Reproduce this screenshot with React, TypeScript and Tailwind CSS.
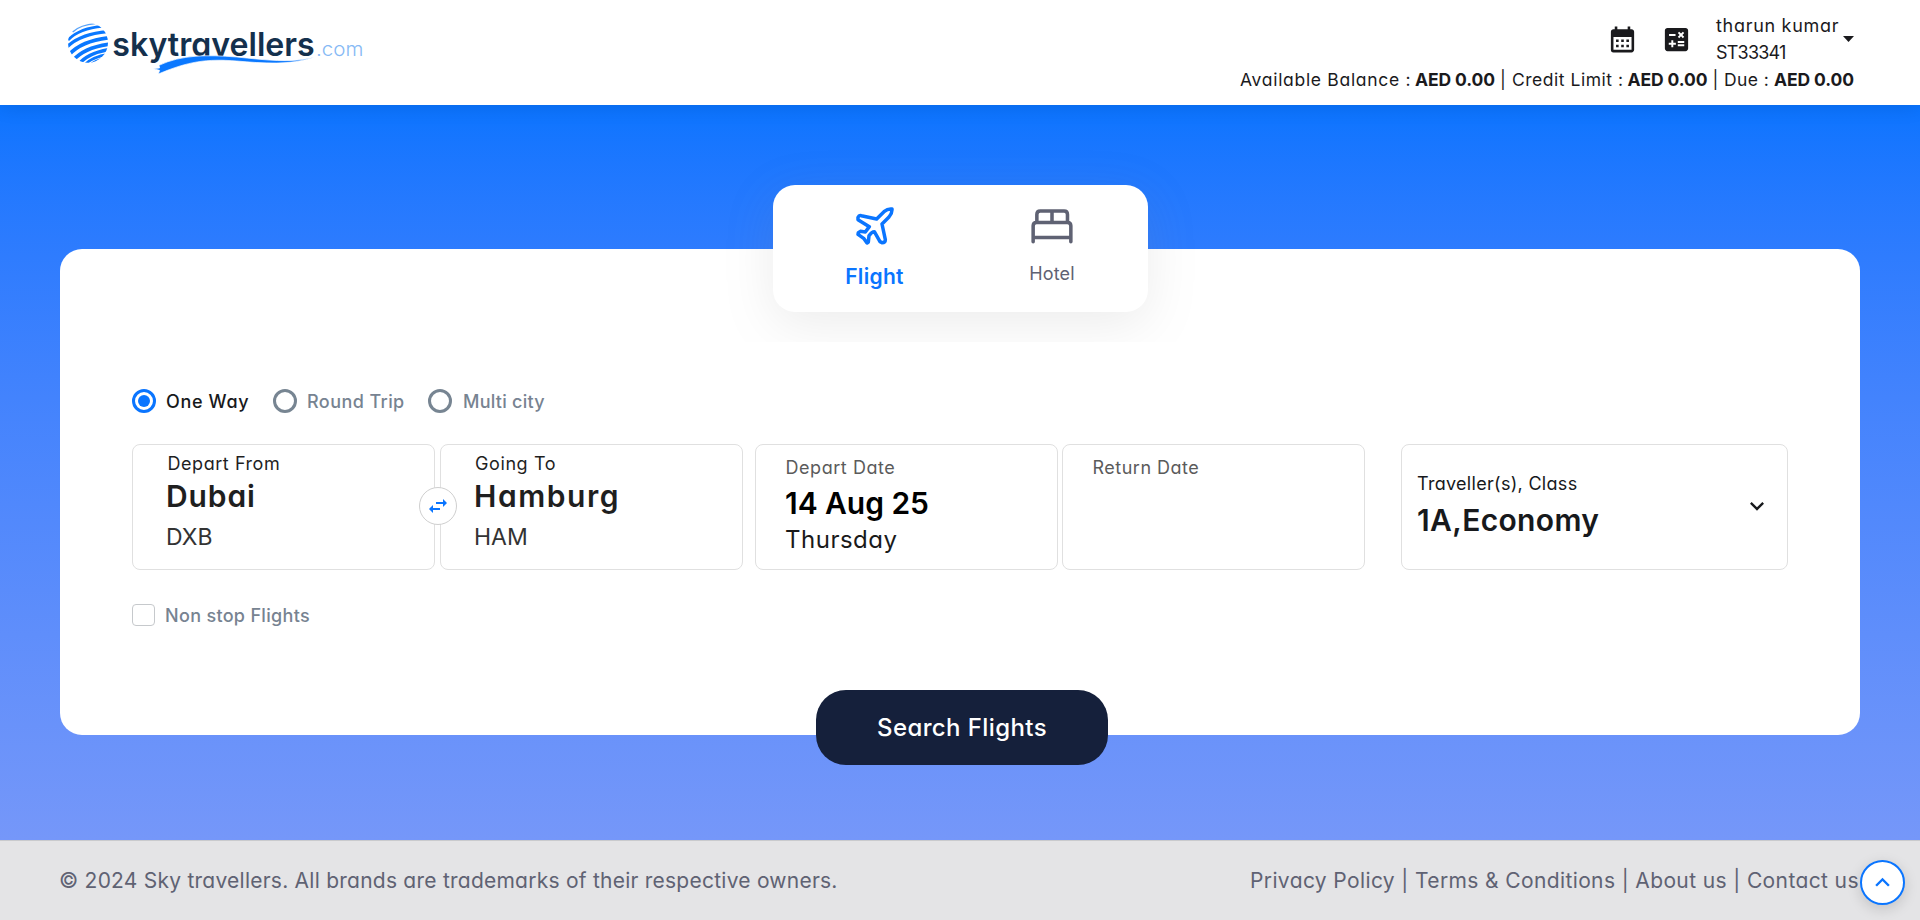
import { MdCalculate, MdCalendarMonth, MdKeyboardArrowDown, MdKeyboardArrowUp, MdSwapHoriz } from "react-icons/md";

function Logo() {
  return (
    <svg width="340" height="104" viewBox="0 0 1020 312" role="img" aria-label="skytravellers.com">
      <defs>
        <clipPath id="globe">
          <circle cx="114" cy="128" r="60" />
        </clipPath>
      </defs>
      <g clipPath="url(#globe)" fill="none" stroke="#0a78ff">
        <path d="M68 96 Q92 74 136 71" strokeWidth="4" stroke="#5ba4f8" />
        <path d="M54 120 Q88 84 158 79" strokeWidth="8" />
        <path d="M50 142 Q90 102 172 95" strokeWidth="10" />
        <path d="M56 165 Q94 122 178 113" strokeWidth="11" />
        <path d="M68 182 Q102 142 180 132" strokeWidth="11" />
        <path d="M84 196 Q108 160 180 148" strokeWidth="10" />
        <path d="M100 200 Q120 172 174 163" strokeWidth="8" />
        <path d="M120 196 Q132 180 162 176" strokeWidth="6" />
      </g>
      <text x="187" y="168" textLength="607" lengthAdjust="spacingAndGlyphs" fontSize="99" fontWeight="600" fill="#14304d">
        skytravellers
      </text>
      <text x="798" y="168" textLength="142" lengthAdjust="spacingAndGlyphs" fontSize="58" fontWeight="300" fill="#86b9f5">
        .com
      </text>
      <path
        d="M310 206 L329 204 L327 196 C395 164 470 164 560 171 C650 180 720 190 793 172 C720 196 640 190 560 183 C470 176 415 184 325 222 L329 211 Z"
        fill="#0a78ff"
        stroke="#ffffff"
        strokeWidth="2"
      />
    </svg>
  );
}

function PlaneIcon() {
  return (
    <svg width="38" height="38" viewBox="0 0 114 114" fill="none" stroke="#0a75ff" strokeWidth="10.5" strokeLinejoin="round">
      <path d="M62 36 L84 14 Q96 4 108 6 Q109 18 99 30 L78 51 L88 98 Q88 107 78 107 L72 104 L55 74 Q47 74 39 86 L37 105 L33 108 L24 95 L6 82 L7 77 L13 73 L28 75 L40 59 L6 38 V31 Q9 24 16 26 Z" />
    </svg>
  );
}

function BedIcon() {
  return (
    <svg width="42" height="35" viewBox="0 0 124 104" fill="none" stroke="#5f6273" strokeWidth="10.5" strokeLinecap="round">
      <path d="M6 97 V50 Q6 40 16 40 H108 Q118 40 118 50 V97 M6 85 H118 M17 38 V16 Q17 6 27 6 H98 Q108 6 108 16 V38 M62 6 V38" />
    </svg>
  );
}

function Header() {
  return (
    <header className="relative z-20 flex h-[105px] justify-between bg-white pl-[50px] pr-[66px] shadow-[0_0_20px_rgba(0,0,0,0.12)]">
      <Logo />
      <div className="flex flex-col items-end pt-3 text-[#1a1a1d]">
        <div className="flex h-[54px] items-center">
          <MdCalendarMonth size={31} className="mr-[23px]" />
          <MdCalculate size={31} className="mr-6" />
          <div className="w-[127px] whitespace-nowrap text-[18px] leading-[27px]">
            <div className="tracking-[0.7px]">tharun kumar</div>
            <div className="tracking-[-0.8px]">ST33341</div>
          </div>
          <svg width="11" height="6" viewBox="0 0 11 6" fill="currentColor">
            <path d="M0 0h11L5.5 6z" />
          </svg>
        </div>
        <div className="flex whitespace-nowrap text-[17.5px] leading-7">
          <span className="w-[175px] tracking-[0.7px]">Available Balance :</span>
          <b className="w-[85px] tracking-[-0.1px]">AED 0.00</b>
          <span className="w-[12px]">|</span>
          <span className="w-[115.5px] tracking-[0.52px]">Credit Limit :</span>
          <b className="w-[85px] tracking-[-0.1px]">AED 0.00</b>
          <span className="w-[11.5px]">|</span>
          <span className="w-[50px] tracking-[0.4px]">Due :</span>
          <b className="w-[80px] tracking-[-0.1px]">AED 0.00</b>
        </div>
      </div>
    </header>
  );
}

function ProductTabs() {
  return (
    <nav className="mx-auto flex h-[127px] w-[375px] rounded-[22px] bg-white pl-[11px] shadow-[0_12px_50px_rgba(130,130,130,0.15)]">
      <button className="flex w-[182px] flex-col items-center pt-[22px] text-[#0a75ff]">
        <PlaneIcon />
        <span className="mt-[17px] text-[21px] font-semibold leading-[30px] tracking-[0.3px]">Flight</span>
      </button>
      <button className="flex w-[173px] flex-col items-center pt-6 text-[#5f6273]">
        <BedIcon />
        <span className="mt-[16px] text-[18px] leading-7 tracking-[0.2px]">Hotel</span>
      </button>
    </nav>
  );
}

function Radio({ checked = false }: { checked?: boolean }) {
  return checked ? (
    <span className="flex size-6 items-center justify-center rounded-full border-[3px] border-[#0a75ff]">
      <span className="size-3 rounded-full bg-[#0a75ff]" />
    </span>
  ) : (
    <span className="size-6 rounded-full border-[3px] border-[#778592]" />
  );
}

const box = "h-[126px] rounded-lg border border-[#e0e0e0] bg-white whitespace-nowrap";
const big = "text-[30px] font-semibold leading-9";
const sub = "leading-8";
const label = "text-[18px] leading-7";

function SearchForm() {
  return (
    <div className="relative z-10 h-[352px] bg-white pl-[72px] pt-[47px]">
      <div className="flex h-6 items-center whitespace-nowrap text-[18px] font-medium text-[#778391]">
        <Radio checked />
        <span className="ml-[10px] w-[107px] tracking-[0.65px] text-[#17191c]">One Way</span>
        <Radio />
        <span className="ml-[10px] w-[121px] tracking-[0.42px]">Round Trip</span>
        <Radio />
        <span className="ml-[11px] tracking-[0.25px]">Multi city</span>
      </div>
      <div className="mt-[31px] flex">
        <div className={`${box} w-[303px] pl-[33px] pt-[5px] text-[#1f1f1f]`}>
          <div className={`${label} pl-[1.5px] tracking-[0.55px]`}>Depart From</div>
          <div className={`${big} tracking-[0.9px]`}>Dubai</div>
          <div className={`${sub} mt-[6.5px] text-[23px] text-[#333333]`}>DXB</div>
        </div>
        <div className="z-10 -ml-4 -mr-[17px] mt-[43px] flex size-[38px] items-center justify-center rounded-full border border-[#cfcfcf] bg-white text-[#0a75ff]">
          <MdSwapHoriz size={24} />
        </div>
        <div className={`${box} w-[303px] pl-[33px] pt-[5px] text-[#1f1f1f]`}>
          <div className={`${label} pl-[1px] tracking-[0.6px]`}>Going To</div>
          <div className={`${big} tracking-[1.55px]`}>Hamburg</div>
          <div className={`${sub} mt-[6.5px] text-[23px] text-[#333333]`}>HAM</div>
        </div>
        <div className={`${box} ml-3 w-[303px] pl-[29px] pt-[9px] text-black`}>
          <div className={`${label} pl-[0.5px] tracking-[0.55px] text-[#5b5b5b]`}>Depart Date</div>
          <div className={`${big} mt-[3px] tracking-[-0.05px]`}>14 Aug 25</div>
          <div className={`${sub} mt-[3px] text-[24px] tracking-[0.5px] text-[#1a1a1a]`}>Thursday</div>
        </div>
        <div className={`${box} ml-1 w-[303px] pl-[29px] pt-[9px]`}>
          <div className={`${label} pl-[0.5px] tracking-[0.5px] text-[#5b5b5b]`}>Return Date</div>
        </div>
        <div className={`${box} ml-9 flex w-[387px] justify-between pl-[15px] pr-[16px] text-[#17191c]`}>
          <div className="pt-[25px]">
            <div className={`${label} tracking-[0.3px]`}>Traveller(s), Class</div>
            <div className={`${big} mt-[3.5px] tracking-[0.35px]`}>1A,Economy</div>
          </div>
          <MdKeyboardArrowDown size={28} className="mt-[47px]" />
        </div>
      </div>
      <div className="mt-[34px] flex h-[22px] items-center">
        <span className="h-[22px] w-[23px] rounded border border-[#c6c9cc]" />
        <span className="ml-[10px] text-[18px] font-medium tracking-[0.32px] text-[#778391]">Non stop Flights</span>
      </div>
    </div>
  );
}

export default function App() {
  return (
    <div className="flex h-[920px] w-[1920px] flex-col overflow-hidden bg-white font-['Inter','Noto_Sans',sans-serif] [font-feature-settings:'cv11']">
      <Header />
      <main className="flex h-[735px] flex-col bg-linear-to-b from-[#0a74ff] to-[#7597f9] pt-20">
        <div className="relative z-10 mx-auto">
          <ProductTabs />
        </div>
        <section className="-mt-[63px] h-[486px] w-[1800px] self-center rounded-[22px] bg-white pt-[93px]">
          <SearchForm />
        </section>
        <button className="relative z-10 ml-[816px] -mt-[45px] h-[75px] w-[292px] rounded-[30px] bg-[#15203b] text-[24px] font-medium tracking-[0.4px] text-white">
          Search Flights
        </button>
      </main>
      <footer className="flex h-20 items-center border-t border-[#c9cacd] bg-[#e4e4e6] pl-[59px] text-[21px] text-[#5f6273]">
        <p className="w-[1191px] whitespace-nowrap tracking-[0.24px]">
          © 2024 Sky travellers. All brands are trademarks of their respective owners.
        </p>
        <p className="w-[610px] whitespace-nowrap tracking-[0.38px]">Privacy Policy | Terms &amp; Conditions | About us | Contact us</p>
        <button className="mt-1 flex size-[45px] items-center justify-center rounded-full border-2 border-[#0a75ff] bg-white text-[#0a75ff] shadow-[0_4px_14px_rgba(0,0,0,0.15)]">
          <MdKeyboardArrowUp size={29} />
        </button>
      </footer>
    </div>
  );
}
